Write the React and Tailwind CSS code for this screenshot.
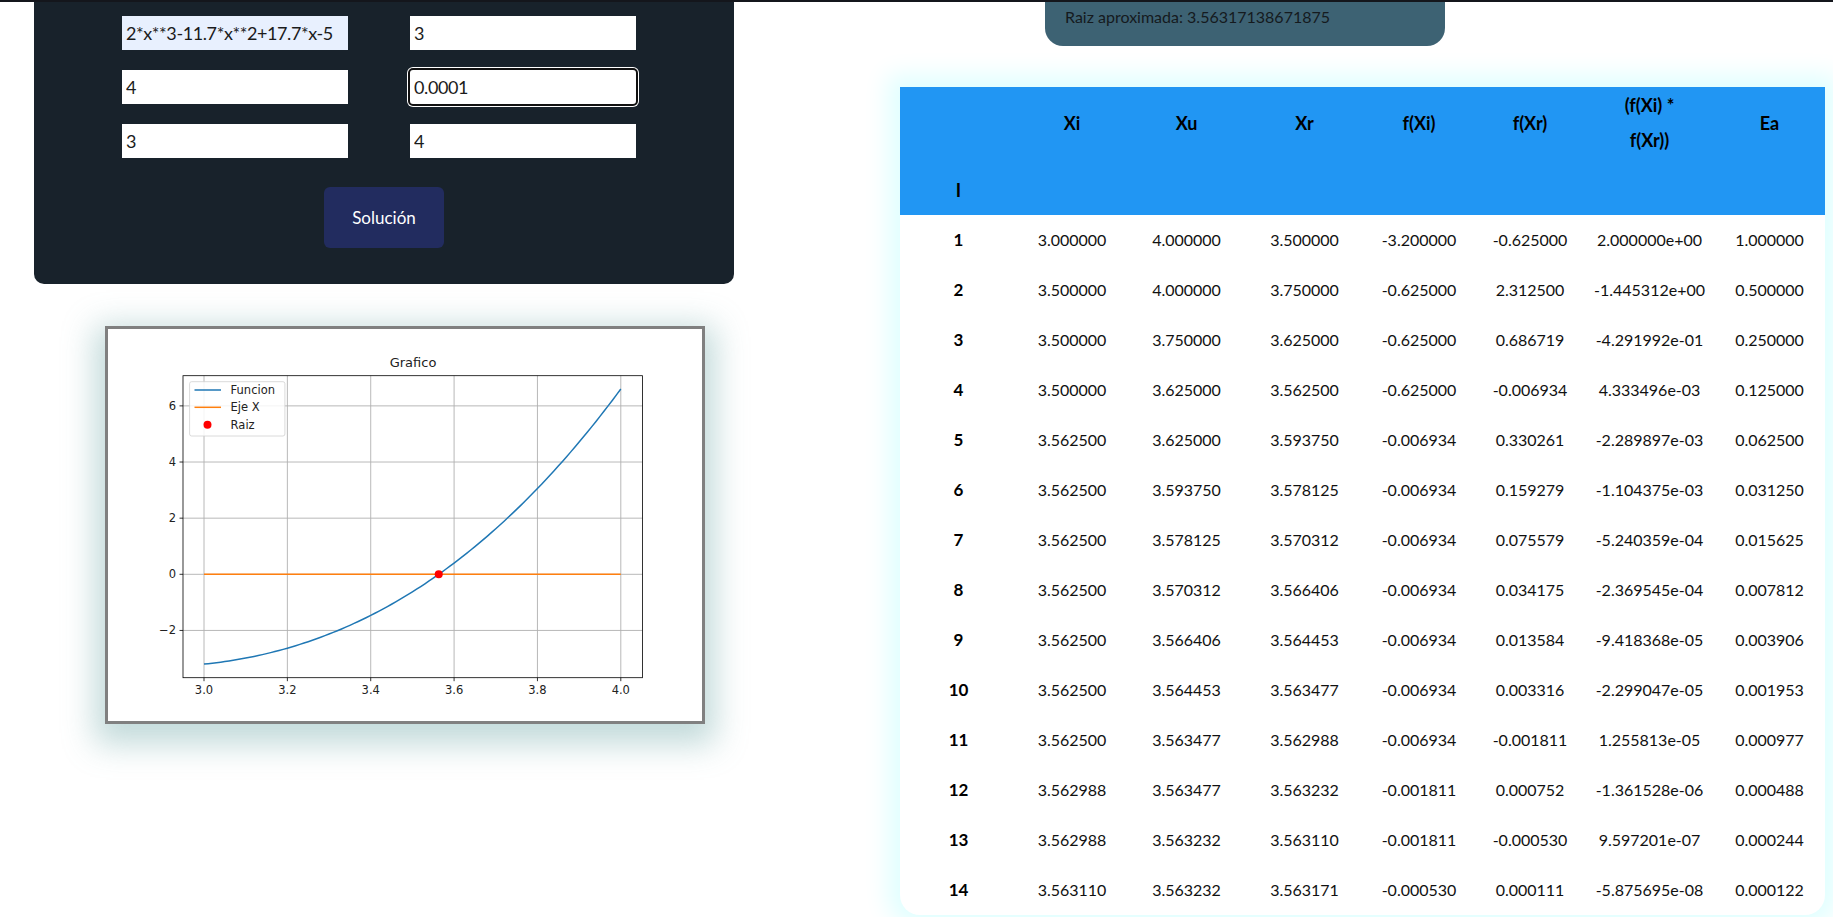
const FONT = "font-['Lato',sans-serif]";

const ROWS = [
  [1, '3.000000', '4.000000', '3.500000', '-3.200000', '-0.625000', '2.000000e+00', '1.000000'],
  [2, '3.500000', '4.000000', '3.750000', '-0.625000', '2.312500', '-1.445312e+00', '0.500000'],
  [3, '3.500000', '3.750000', '3.625000', '-0.625000', '0.686719', '-4.291992e-01', '0.250000'],
  [4, '3.500000', '3.625000', '3.562500', '-0.625000', '-0.006934', '4.333496e-03', '0.125000'],
  [5, '3.562500', '3.625000', '3.593750', '-0.006934', '0.330261', '-2.289897e-03', '0.062500'],
  [6, '3.562500', '3.593750', '3.578125', '-0.006934', '0.159279', '-1.104375e-03', '0.031250'],
  [7, '3.562500', '3.578125', '3.570312', '-0.006934', '0.075579', '-5.240359e-04', '0.015625'],
  [8, '3.562500', '3.570312', '3.566406', '-0.006934', '0.034175', '-2.369545e-04', '0.007812'],
  [9, '3.562500', '3.566406', '3.564453', '-0.006934', '0.013584', '-9.418368e-05', '0.003906'],
  [10, '3.562500', '3.564453', '3.563477', '-0.006934', '0.003316', '-2.299047e-05', '0.001953'],
  [11, '3.562500', '3.563477', '3.562988', '-0.006934', '-0.001811', '1.255813e-05', '0.000977'],
  [12, '3.562988', '3.563477', '3.563232', '-0.001811', '0.000752', '-1.361528e-06', '0.000488'],
  [13, '3.562988', '3.563232', '3.563110', '-0.001811', '-0.000530', '9.597201e-07', '0.000244'],
  [14, '3.563110', '3.563232', '3.563171', '-0.000530', '0.000111', '-5.875695e-08', '0.000122'],
];

const COLS = [117, 110, 119, 117, 112, 110, 129, 111];
const HEADS = ['Xi', 'Xu', 'Xr', 'f(Xi)', 'f(Xr)', null, 'Ea'];

// chart mapping (svg coords inside the framed box)
const X0 = 96;
const XS = 416.8;
const Y0 = 245.3;
const YS = 28.07;
const fx = (x) => 2 * x ** 3 - 11.7 * x ** 2 + 17.7 * x - 5;

const Chart = () => {
  const pts = [];
  for (let i = 0; i <= 100; i++) {
    const x = 3 + i / 100;
    pts.push(`${(X0 + (x - 3) * XS).toFixed(2)},${(Y0 - fx(x) * YS).toFixed(2)}`);
  }
  const xticks = ['3.0', '3.2', '3.4', '3.6', '3.8', '4.0'];
  const yticks = [6, 4, 2, 0, -2];

  return (
    <svg width="594" height="392" viewBox="0 0 594 392" className="block">
      <rect width="594" height="392" fill="#fff" />
      <g fontFamily="'DejaVu Sans', sans-serif" fill="#222">
        <text x="305" y="38" fontSize="13" textAnchor="middle">Grafico</text>
        {/* grid */}
        {xticks.map((t, i) => {
          const x = X0 + i * 0.2 * XS;
          return (
            <g key={t}>
              <line x1={x} y1="46.7" x2={x} y2="348.7" stroke="#b0b0b0" strokeWidth="0.9" />
              <line x1={x} y1="348.7" x2={x} y2="352.2" stroke="#000" strokeWidth="0.8" />
              <text x={x} y="365" fontSize="11.5" textAnchor="middle">{t}</text>
            </g>
          );
        })}
        {yticks.map((t) => {
          const y = Y0 - t * YS;
          return (
            <g key={t}>
              <line x1="75" y1={y} x2="534.5" y2={y} stroke="#b0b0b0" strokeWidth="0.9" />
              <line x1="71.5" y1={y} x2="75" y2={y} stroke="#000" strokeWidth="0.8" />
              <text x="68" y={y + 4} fontSize="11.5" textAnchor="end">{t < 0 ? `\u2212${-t}` : t}</text>
            </g>
          );
        })}
        <polyline points={pts.join(' ')} fill="none" stroke="#1f77b4" strokeWidth="1.5" />
        <line x1={X0} y1={Y0} x2={X0 + XS} y2={Y0} stroke="#ff7f0e" strokeWidth="1.5" />
        <circle cx={X0 + 0.56317 * XS} cy={Y0} r="4" fill="#ff0000" />
        <rect x="75" y="46.7" width="459.5" height="302" fill="none" stroke="#000" strokeWidth="0.8" />
        {/* legend */}
        <rect x="81.6" y="52.7" width="95.3" height="54.3" rx="2" fill="#fff" fillOpacity="0.85" stroke="#d0d0d0" strokeWidth="0.8" />
        <line x1="86.5" y1="61" x2="113" y2="61" stroke="#1f77b4" strokeWidth="1.5" />
        <line x1="86.5" y1="78.3" x2="113" y2="78.3" stroke="#ff7f0e" strokeWidth="1.5" />
        <circle cx="99.5" cy="95.7" r="4" fill="#ff0000" />
        <text x="122.6" y="65" fontSize="11.5">Funcion</text>
        <text x="122.6" y="82.3" fontSize="11.5">Eje X</text>
        <text x="122.6" y="99.7" fontSize="11.5">Raiz</text>
      </g>
    </svg>
  );
};

const Field = ({ value, focused, filled }) => (
  <input
    readOnly
    defaultValue={value}
    className={`h-[34px] w-[226px] px-[4px] text-[18px] tracking-[-0.4px] text-[#1b1b1b] ${FONT} ${
      filled ? 'bg-[#e8f0fe]' : 'bg-white'
    } ${focused ? 'rounded-[3px] outline-2 outline-[#111] shadow-[0_0_0_3px_#ffffff]' : 'outline-none'}`}
  />
);

export default function App() {
  return (
    <div className={`w-[1833px] h-[917px] overflow-hidden bg-white ${FONT}`}>
      <div className="h-[2px] bg-[#14161c]" />
      <div className="flex">
        {/* Left: form + chart */}
        <div className="w-[900px] shrink-0">
          <div className="ml-[34px] w-[700px] rounded-b-[10px] bg-[#18222b] pt-[14px] pb-[36px]">
            <div className="ml-[88px] grid grid-cols-[226px_226px] gap-x-[62px] gap-y-[20px]">
              <Field value="2*x**3-11.7*x**2+17.7*x-5" filled />
              <Field value="3" />
              <Field value="4" />
              <Field value="0.0001" focused />
              <Field value="3" />
              <Field value="4" />
            </div>
            <button className="mx-auto mt-[29px] flex h-[61px] w-[120px] items-center justify-center rounded-[6px] bg-[#222c5f] text-[17px] text-white">
              Solución
            </button>
          </div>

          <div className="ml-[105px] mt-[42px] w-[600px] h-[398px] border-[3px] border-[#808080] bg-white shadow-[0_10px_30px_10px_rgba(120,172,172,0.45)]">
            <Chart />
          </div>
        </div>

        {/* Right: result + table */}
        <div className="flex-1">
          <div className="ml-[145px] h-[44px] w-[400px] rounded-b-[18px] bg-[#3d6273] pl-[20px] pt-[3px] text-[16px] leading-[24px] text-[#151a1e]">
            Raiz aproximada: 3.56317138671875
          </div>

          <div className="mt-[41px] w-[925px] rounded-b-[20px] bg-white shadow-[0_0_24px_12px_#e0ffff]">
            <table className="w-[925px] table-fixed border-collapse whitespace-nowrap text-center text-[16px] text-[#111]">
              <colgroup>
                {COLS.map((w, i) => (
                  <col key={i} style={{ width: w }} />
                ))}
              </colgroup>
              <thead className="bg-[#2196f3] text-[18px] text-black">
                <tr className="h-[78px]">
                  <th />
                  {HEADS.map((h, i) => (
                    <th key={i} className="pb-[6px] font-bold leading-[35px]">
                      {h ?? (
                        <>
                          (f(Xi) *<br />f(Xr))
                        </>
                      )}
                    </th>
                  ))}
                </tr>
                <tr className="h-[50px]">
                  <th className="font-bold">I</th>
                  <th />
                  <th />
                  <th />
                  <th />
                  <th />
                  <th />
                  <th />
                </tr>
              </thead>
              <tbody>
                {ROWS.map((r) => (
                  <tr key={r[0]} className="h-[50px]">
                    <th className="text-[17px] font-bold text-black">{r[0]}</th>
                    {r.slice(1).map((v, i) => (
                      <td key={i}>{v}</td>
                    ))}
                  </tr>
                ))}
              </tbody>
            </table>
          </div>
        </div>
      </div>
    </div>
  );
}
